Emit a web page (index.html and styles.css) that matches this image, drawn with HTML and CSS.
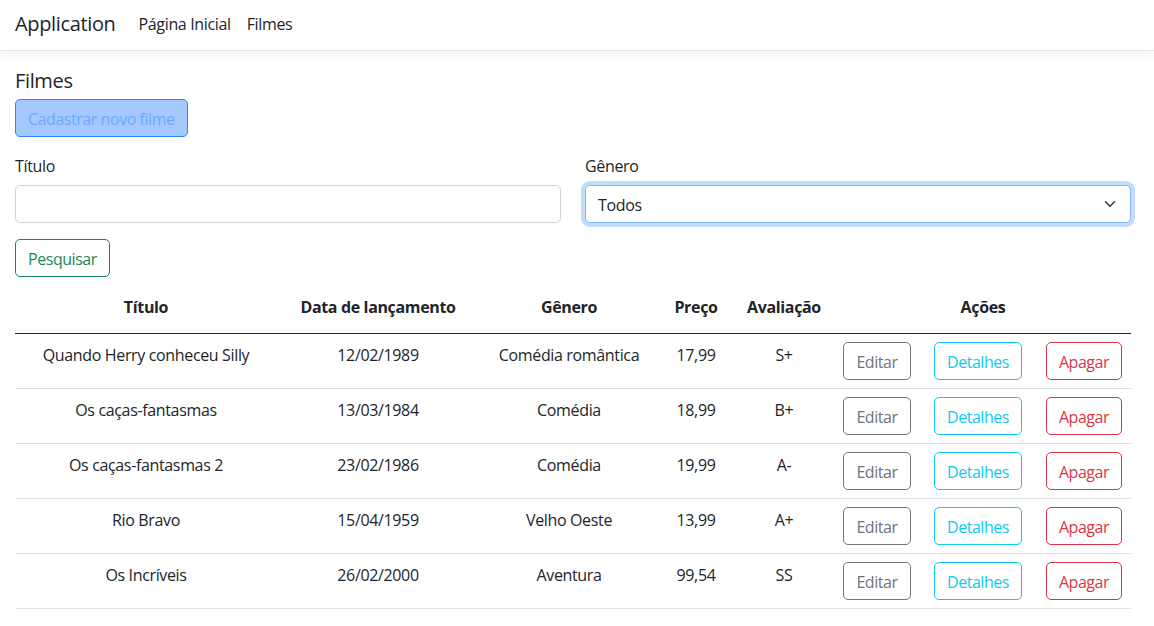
FILE: index.html
```html
<!DOCTYPE html>
<html lang="pt-BR">
<head>
<meta charset="utf-8">
<title>Filmes - Application</title>
<link rel="stylesheet" href="styles.css">
</head>
<body>
<header class="navbar">
  <a class="brand" href="#">Application</a>
  <nav class="nav-links">
    <a class="nav-link" href="#">Página Inicial</a>
    <a class="nav-link" href="#">Filmes</a>
  </nav>
</header>
<main class="page">
  <h5 class="page-title">Filmes</h5>
  <button class="btn btn-create" type="button" disabled>Cadastrar novo filme</button>
  <form class="search">
    <div class="search-row">
      <div class="field">
        <label class="form-label" for="titulo">Título</label>
        <input class="form-control" id="titulo" type="text">
      </div>
      <div class="field">
        <label class="form-label" for="genero">Gênero</label>
        <select class="form-select is-focused" id="genero">
          <option>Todos</option>
        </select>
      </div>
    </div>
    <button class="btn btn-outline-success" type="button">Pesquisar</button>
  </form>
  <table class="movies">
    <colgroup>
      <col class="c-title"><col class="c-date"><col class="c-genre"><col class="c-price"><col class="c-rating"><col class="c-edit"><col class="c-details"><col class="c-delete">
    </colgroup>
    <thead>
      <tr>
        <th>Título</th>
        <th>Data de lançamento</th>
        <th>Gênero</th>
        <th>Preço</th>
        <th>Avaliação</th>
        <th colspan="3">Ações</th>
      </tr>
    </thead>
    <tbody>
      <tr>
        <td>Quando Herry conheceu Silly</td><td>12/02/1989</td><td>Comédia romântica</td><td>17,99</td><td>S+</td>
        <td class="act"><button class="btn btn-outline-secondary" type="button">Editar</button></td>
        <td class="act"><button class="btn btn-outline-info" type="button">Detalhes</button></td>
        <td class="act"><button class="btn btn-outline-danger" type="button">Apagar</button></td>
      </tr>
      <tr>
        <td>Os caças-fantasmas</td><td>13/03/1984</td><td>Comédia</td><td>18,99</td><td>B+</td>
        <td class="act"><button class="btn btn-outline-secondary" type="button">Editar</button></td>
        <td class="act"><button class="btn btn-outline-info" type="button">Detalhes</button></td>
        <td class="act"><button class="btn btn-outline-danger" type="button">Apagar</button></td>
      </tr>
      <tr>
        <td>Os caças-fantasmas 2</td><td>23/02/1986</td><td>Comédia</td><td>19,99</td><td>A-</td>
        <td class="act"><button class="btn btn-outline-secondary" type="button">Editar</button></td>
        <td class="act"><button class="btn btn-outline-info" type="button">Detalhes</button></td>
        <td class="act"><button class="btn btn-outline-danger" type="button">Apagar</button></td>
      </tr>
      <tr>
        <td>Rio Bravo</td><td>15/04/1959</td><td>Velho Oeste</td><td>13,99</td><td>A+</td>
        <td class="act"><button class="btn btn-outline-secondary" type="button">Editar</button></td>
        <td class="act"><button class="btn btn-outline-info" type="button">Detalhes</button></td>
        <td class="act"><button class="btn btn-outline-danger" type="button">Apagar</button></td>
      </tr>
      <tr>
        <td>Os Incríveis</td><td>26/02/2000</td><td>Aventura</td><td>99,54</td><td>SS</td>
        <td class="act"><button class="btn btn-outline-secondary" type="button">Editar</button></td>
        <td class="act"><button class="btn btn-outline-info" type="button">Detalhes</button></td>
        <td class="act"><button class="btn btn-outline-danger" type="button">Apagar</button></td>
      </tr>
    </tbody>
  </table>
</main>
</body>
</html>
```

FILE: styles.css
```css
* { box-sizing: border-box; }

html, body {
  margin: 0;
  padding: 0;
  background: #fff;
}

body {
  font-family: "Open Sans", "Noto Sans", sans-serif;
  font-size: 16px;
  line-height: 1.5;
  color: #212529;
  letter-spacing: -0.35px;
}

a { text-decoration: none; color: inherit; }

/* Navbar */
.navbar {
  height: 51px;
  display: flex;
  align-items: center;
  padding: 0 15px 2px;
  border-bottom: 1px solid #e5e5e5;
  box-shadow: 0 4px 12px rgba(0, 0, 0, 0.05);
  background: #fff;
}

.brand {
  font-size: 20px;
  line-height: 30px;
  color: #212529;
  margin-right: 15px;
}

.nav-links {
  display: flex;
}

.nav-link {
  padding: 0 8px;
  color: #212529;
  font-size: 16px;
  line-height: 24px;
}

/* Page */
.page {
  width: 1116px;
  margin-left: 15px;
  padding-top: 17px;
}

.page-title {
  margin: 0 0 6px;
  padding-top: 1px;
  font-size: 20px;
  line-height: 24px;
  font-weight: 400;
}

.btn {
  display: inline-block;
  font-family: inherit;
  font-size: 16px;
  line-height: 24px;
  letter-spacing: -0.45px;
  padding: 7px 12px 5px;
  border: 1px solid transparent;
  border-radius: 5px;
  background: transparent;
  vertical-align: top;
  cursor: pointer;
}

.btn-create {
  background: #a5c8fe;
  border-color: #2f82fd;
  color: #6ea8fe;
  cursor: default;
}

.search {
  margin-top: 16px;
}

.search-row {
  display: grid;
  grid-template-columns: 1fr 1fr;
  column-gap: 24px;
  margin-bottom: 16px;
}

.field {
  display: flex;
  flex-direction: column;
}

.form-label {
  line-height: 24px;
  padding-top: 1px;
  margin-bottom: 7px;
}

.form-control,
.form-select {
  height: 38px;
  font-family: inherit;
  font-size: 16px;
  letter-spacing: -0.35px;
  color: #212529;
  padding: 7px 12px 5px;
  border: 1px solid #ced4da;
  border-radius: 5px;
  background-color: #fff;
  outline: none;
}

.form-select {
  -webkit-appearance: none;
  appearance: none;
  padding-right: 36px;
  background-image: url("data:image/svg+xml,%3csvg xmlns='http://www.w3.org/2000/svg' viewBox='0 0 16 16'%3e%3cpath fill='none' stroke='%23343a40' stroke-linecap='round' stroke-linejoin='round' stroke-width='2' d='M2 5l6 6 6-6'/%3e%3c/svg%3e");
  background-repeat: no-repeat;
  background-position: right 12px center;
  background-size: 16px 12px;
}

.form-select.is-focused {
  border-color: #86b7fe;
  box-shadow: 0 0 0 4px rgba(13, 110, 253, 0.25);
}

.btn-outline-success { color: #198754; border-color: #198754; }
.btn-outline-secondary { color: #6c757d; border-color: #6c757d; }
.btn-outline-info { color: #0dcaf0; border-color: #0dcaf0; }
.btn-outline-danger { color: #dc3545; border-color: #dc3545; }

/* Table */
.movies {
  width: 1116px;
  margin-top: 10px;
  border-collapse: collapse;
  table-layout: fixed;
}

.c-title { width: 262px; }
.c-date { width: 202px; }
.c-genre { width: 180px; }
.c-price { width: 74px; }
.c-rating { width: 102px; }
.c-edit { width: 84px; }
.c-details { width: 118px; }
.c-delete { width: 94px; }

.movies th {
  font-weight: 700;
  text-align: center;
  padding: 8px 4px 14px;
  line-height: 24px;
  border-bottom: 1px solid #212529;
  white-space: nowrap;
}

.movies td {
  text-align: center;
  vertical-align: top;
  padding: 9px 4px 7px;
  line-height: 24px;
  border-bottom: 1px solid #dee2e6;
  white-space: nowrap;
}

.movies td.act {
  padding: 8px 4px;
}
```
